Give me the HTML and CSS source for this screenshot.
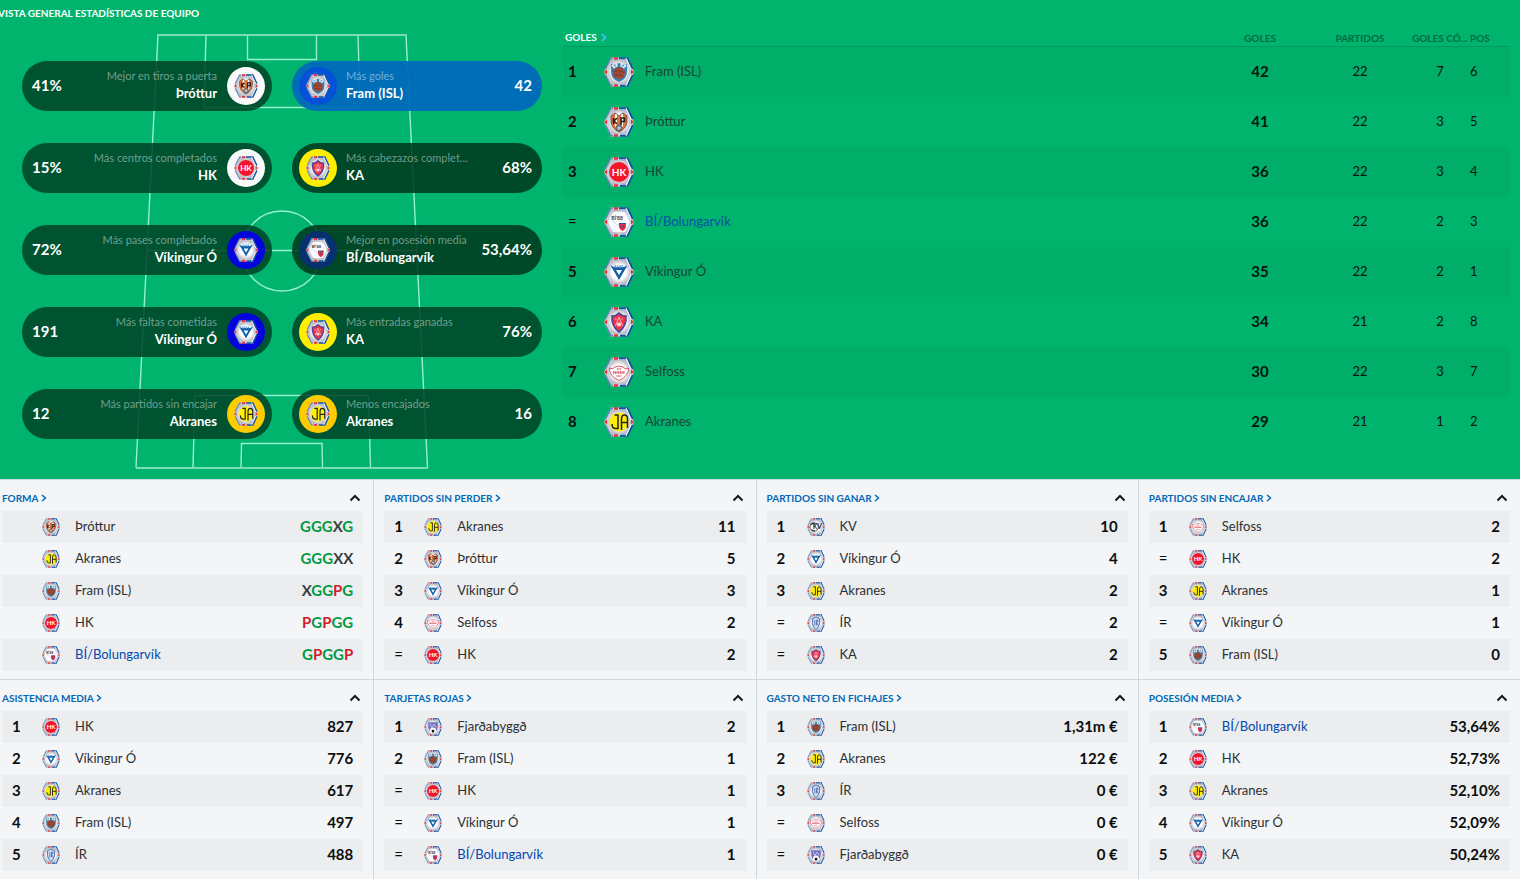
FILE: index.html
```
<!DOCTYPE html>
<html lang="es">
<head>
    <meta charset="UTF-8">
    <meta name="viewport" content="width=device-width, initial-scale=1.0">
    <title>Estadísticas de equipo</title>
    <link rel="stylesheet" href="styles.css">
</head>
<body>
    <!-- Crests and icons -->
    <svg class="sprite" width="0" height="0" aria-hidden="true">
        <defs>
            <radialGradient id="shine">
                <stop offset="0.6" stop-color="#ffffff"/>
                <stop offset="1" stop-color="#b9bcc4"/>
            </radialGradient>
            <symbol id="hex" viewBox="0 0 30 30">
                <path d="M7 0.500H24L30 15L24 29.500H7L0 15Z" fill="#cdd2dc"/>
                <path d="M15 1.300H23.500L28.500 12M28.500 18L23.500 28.700H16" fill="none" stroke="#1450a0" stroke-width="2"/>
                <path d="M1.500 12L7 1.500H9M1.500 18L7 28.500H9" fill="none" stroke="#6d87b3" stroke-width="1.500"/>
                <path d="M22 1L27.500 13M27.500 17L22 29" fill="none" stroke="#ffffff" stroke-width="1"/>
                <path d="M10 1.500H14M10 28.500H14" fill="none" stroke="#e8313b" stroke-width="2.500"/>
                <path d="M0 15L3 12.500V17.500ZM30 15L27 12.500V17.500Z" fill="#e8313b"/>
                <path d="M8 3H22L27 15L22 27H8L3 15Z" fill="url(#shine)"/>
            </symbol>
            <symbol id="fram" viewBox="0 0 30 30">
                <use href="#hex"/>
                <path d="M7 7L10 8L15 6L20 8L23 7V15Q23 22 15 25Q7 22 7 15Z" fill="#3b7fae"/>
                <path d="M8 8L11 11M12.500 7V10M17.500 7V10M22 8L19 11" stroke="#d7eefa" stroke-width="2"/>
                <circle cx="15" cy="16" r="6" fill="#9c4a34"/>
                <path d="M9.500 14.500Q15 12.500 20.500 15.500M10 18.500Q15 16.500 20 19.500" fill="none" stroke="#6d3325" stroke-width="0.700"/>
            </symbol>
            <symbol id="throttur" viewBox="0 0 30 30">
                <use href="#hex"/>
                <path d="M7 9L11 6L15 9L19 6L23 9V15Q22 22 15 25Q8 22 7 15Z" fill="#e4713a"/>
                <path d="M12 7V20M18 7V20" stroke="#ffffff" stroke-width="2"/>
                <path d="M9.500 11V17M13 11L10 14L13 17M17 18V11H20.500V14.500H17" fill="none" stroke="#2b1d1a" stroke-width="1.600"/>
                <path d="M7 9L11 6L15 9L19 6L23 9V15Q22 22 15 25Q8 22 7 15Z" fill="none" stroke="#5b4038" stroke-width="0.800"/>
                <circle cx="15" cy="21" r="3.500" fill="#6a6a6a"/>
                <path d="M13 21H17M15 19V23" stroke="#ffffff" stroke-width="0.800"/>
            </symbol>
            <symbol id="hk" viewBox="0 0 30 30">
                <use href="#hex"/>
                <circle cx="15" cy="15" r="10" fill="#f5152b"/>
                <text x="15" y="18.500" text-anchor="middle" class="mark" font-size="10" fill="#ffffff">HK</text>
            </symbol>
            <symbol id="bi" viewBox="0 0 30 30">
                <use href="#hex"/>
                <path d="M9 5H21L26 15L21 25H9L4 15Z" fill="#fbfbfd"/>
                <text x="13" y="13" text-anchor="middle" class="mark" font-size="5" fill="#33343a">BÍ'88</text>
                <path d="M8 14L17 20" stroke="#c4c4cc" stroke-width="0.700"/>
                <path d="M15 16H22V19Q22 22 18.500 24Q15 22 15 19Z" fill="#e1324a"/>
                <path d="M15 16.500H22M17 21L18.500 19L20 21" fill="none" stroke="#36519c" stroke-width="1.200"/>
            </symbol>
            <symbol id="vikingur" viewBox="0 0 30 30">
                <use href="#hex"/>
                <path d="M6.500 8.500L10 10H20L23.500 8.500L19 16L15 23L11 16Z" fill="#0f5faa"/>
                <path d="M12 13H18L15 18Z" fill="#ffffff"/>
                <path d="M10.500 9.500H19.500" stroke="#6aa2d5" stroke-width="2.500" stroke-dasharray="1.500 0.800"/>
            </symbol>
            <symbol id="ka" viewBox="0 0 30 30">
                <use href="#hex"/>
                <path d="M8 9Q12 9 15 6Q18 9 22 9Q23 19 15 25Q7 19 8 9Z" fill="#ef3348" stroke="#49479c" stroke-width="1.600"/>
                <path d="M11.500 19L15 10L18.500 19M11 12H12.500M17.500 12H19" fill="none" stroke="#ffb9c0" stroke-width="1"/>
                <circle cx="15" cy="17.500" r="2" fill="#ffd9dc"/>
            </symbol>
            <symbol id="selfoss" viewBox="0 0 30 30">
                <use href="#hex"/>
                <path d="M5.500 11Q9 13 11 10Q15 8 19 10Q21 13 24.500 11Q25 19 15 23.500Q5 19 5.500 11Z" fill="#ffffff" stroke="#dc5468" stroke-width="1"/>
                <path d="M13 12H17" stroke="#dc5468" stroke-width="1.500" stroke-dasharray="1 0.500"/>
                <path d="M9 15.500H21" stroke="#dc5468" stroke-width="2.500" stroke-dasharray="1.200 0.500"/>
                <path d="M12.500 19H17.500" stroke="#dc5468" stroke-width="1.500" stroke-dasharray="1 0.500"/>
            </symbol>
            <symbol id="akranes" viewBox="0 0 30 30">
                <use href="#hex"/>
                <circle cx="15" cy="15" r="9.500" fill="#fcee05"/>
                <path d="M10.500 8H14V21.500H11.500Q8 21.500 8 17M17.500 23V12Q17.500 8 20.500 8Q23.500 8 23.500 12V21M17.500 15.500H23.500" fill="none" stroke="#222222" stroke-width="1.500"/>
            </symbol>
            <symbol id="kv" viewBox="0 0 30 30">
                <use href="#hex"/>
                <circle cx="12" cy="15" r="7" fill="#ffffff" stroke="#222222" stroke-width="1.200"/>
                <path d="M6 11L10 9L14 11M8 20L13 21.500" stroke="#222222" stroke-width="1.800" fill="none"/>
                <text x="17" y="19" text-anchor="middle" class="mark" font-size="11" fill="#222222">KV</text>
            </symbol>
            <symbol id="ir" viewBox="0 0 30 30">
                <use href="#hex"/>
                <path d="M9 8L15 5L21 8V16Q20 22 15 26Q10 22 9 16Z" fill="#cfdcf0" stroke="#3c63ab" stroke-width="1.500"/>
                <path d="M13 10V19M16 19V10H18Q19 13 16 14L19 19" fill="none" stroke="#3c63ab" stroke-width="1.300"/>
            </symbol>
            <symbol id="fjarda" viewBox="0 0 30 30">
                <use href="#hex"/>
                <path d="M7 7H23V16Q22 22 15 26Q8 22 7 16Z" fill="#7471bd"/>
                <path d="M10 9L13 16L17 10L20 16" fill="none" stroke="#c9c8ec" stroke-width="1.500"/>
                <circle cx="15" cy="21" r="5" fill="#ffffff"/>
                <path d="M15 19L17.500 21L16.500 24H13.500L12.500 21Z" fill="#16161c"/>
            </symbol>
            <symbol id="next" viewBox="0 0 6 8">
                <path d="M1 1L4.500 4L1 7" fill="none" stroke="currentColor" stroke-width="1.500"/>
            </symbol>
            <symbol id="up" viewBox="0 0 12 8">
                <path d="M1.500 6.500L6 2L10.500 6.500" fill="none" stroke="currentColor" stroke-width="2"/>
            </symbol>
        </defs>
    </svg>

    <main class="page">
        <section class="overview">
            <div class="overview-left">
                <h1>VISTA GENERAL ESTADÍSTICAS DE EQUIPO</h1>
                <div class="field">
                    <svg class="pitch" viewBox="0 0 294 436" aria-hidden="true">
                        <g fill="none" stroke="#98efd0" stroke-width="1.400">
                            <path d="M23 2L1 434.500M292.500 434.500L271 2"/>
                            <path d="M71 2L69 74.500H225L223 2"/>
                            <path d="M112.500 2V26.500H181.500V2"/>
                            <path d="M12 217.500H281.500"/>
                            <ellipse cx="147" cy="218" rx="40" ry="40"/>
                            <path d="M58 434L60 362.500H233.500L235.500 434"/>
                            <path d="M106 434L106.500 410.500H187L187.500 434"/>
                        </g>
                        <path d="M22 2H272M1 435H293" stroke="#78dcb6" stroke-width="2"/>
                    </svg>
                    <div class="pills">
                        <div class="pill">
                            <strong class="pill-value">41%</strong>
                            <div class="pill-text"><small>Mejor en tiros a puerta</small><b>Þróttur</b></div>
                            <span class="disc white"><svg><use href="#throttur"/></svg></span>
                        </div>
                        <div class="pill flip blue">
                            <strong class="pill-value">42</strong>
                            <div class="pill-text"><small>Más goles</small><b>Fram (ISL)</b></div>
                            <span class="disc royal"><svg><use href="#fram"/></svg></span>
                        </div>
                        <div class="pill">
                            <strong class="pill-value">15%</strong>
                            <div class="pill-text"><small>Más centros completados</small><b>HK</b></div>
                            <span class="disc white"><svg><use href="#hk"/></svg></span>
                        </div>
                        <div class="pill flip dark">
                            <strong class="pill-value">68%</strong>
                            <div class="pill-text"><small>Más cabezazos complet...</small><b>KA</b></div>
                            <span class="disc yellow"><svg><use href="#ka"/></svg></span>
                        </div>
                        <div class="pill">
                            <strong class="pill-value">72%</strong>
                            <div class="pill-text"><small>Más pases completados</small><b>Víkingur Ó</b></div>
                            <span class="disc deep"><svg><use href="#vikingur"/></svg></span>
                        </div>
                        <div class="pill flip dark">
                            <strong class="pill-value">53,64%</strong>
                            <div class="pill-text"><small>Mejor en posesión media</small><b>BÍ/Bolungarvík</b></div>
                            <span class="disc navy"><svg><use href="#bi"/></svg></span>
                        </div>
                        <div class="pill">
                            <strong class="pill-value">191</strong>
                            <div class="pill-text"><small>Más faltas cometidas</small><b>Víkingur Ó</b></div>
                            <span class="disc deep"><svg><use href="#vikingur"/></svg></span>
                        </div>
                        <div class="pill flip">
                            <strong class="pill-value">76%</strong>
                            <div class="pill-text"><small>Más entradas ganadas</small><b>KA</b></div>
                            <span class="disc yellow"><svg><use href="#ka"/></svg></span>
                        </div>
                        <div class="pill">
                            <strong class="pill-value">12</strong>
                            <div class="pill-text"><small>Más partidos sin encajar</small><b>Akranes</b></div>
                            <span class="disc gold"><svg><use href="#akranes"/></svg></span>
                        </div>
                        <div class="pill flip">
                            <strong class="pill-value">16</strong>
                            <div class="pill-text"><small>Menos encajados</small><b>Akranes</b></div>
                            <span class="disc gold"><svg><use href="#akranes"/></svg></span>
                        </div>
                    </div>
                </div>
            </div>

            <table class="goals">
                <thead>
                    <tr>
                        <th colspan="3" class="goals-title"><a href="#">GOLES <svg class="next"><use href="#next"/></svg></a></th>
                        <th class="wide">GOLES</th>
                        <th class="wide">PARTIDOS</th>
                        <th class="corner">GOLES CÓ...</th>
                        <th class="pos">POS</th>
                    </tr>
                </thead>
                <tbody>
                    <tr><td class="rank">1</td><td class="crest"><svg><use href="#fram"/></svg></td><td>Fram (ISL)</td><td class="total">42</td><td class="num">22</td><td class="num">7</td><td class="last">6</td></tr>
                    <tr><td class="rank">2</td><td class="crest"><svg><use href="#throttur"/></svg></td><td>Þróttur</td><td class="total">41</td><td class="num">22</td><td class="num">3</td><td class="last">5</td></tr>
                    <tr><td class="rank">3</td><td class="crest"><svg><use href="#hk"/></svg></td><td>HK</td><td class="total">36</td><td class="num">22</td><td class="num">3</td><td class="last">4</td></tr>
                    <tr><td class="rank tie">=</td><td class="crest"><svg><use href="#bi"/></svg></td><td class="own">BÍ/Bolungarvík</td><td class="total">36</td><td class="num">22</td><td class="num">2</td><td class="last">3</td></tr>
                    <tr><td class="rank">5</td><td class="crest"><svg><use href="#vikingur"/></svg></td><td>Víkingur Ó</td><td class="total">35</td><td class="num">22</td><td class="num">2</td><td class="last">1</td></tr>
                    <tr><td class="rank">6</td><td class="crest"><svg><use href="#ka"/></svg></td><td>KA</td><td class="total">34</td><td class="num">21</td><td class="num">2</td><td class="last">8</td></tr>
                    <tr><td class="rank">7</td><td class="crest"><svg><use href="#selfoss"/></svg></td><td>Selfoss</td><td class="total">30</td><td class="num">22</td><td class="num">3</td><td class="last">7</td></tr>
                    <tr><td class="rank">8</td><td class="crest"><svg><use href="#akranes"/></svg></td><td>Akranes</td><td class="total">29</td><td class="num">21</td><td class="num">1</td><td class="last">2</td></tr>
                </tbody>
            </table>
        </section>

        <section class="cards">
            <article class="card">
                <header><h2><a href="#">FORMA <svg class="next"><use href="#next"/></svg></a></h2><button type="button" aria-label="Contraer"><svg><use href="#up"/></svg></button></header>
                <table>
                    <tr><td class="rank"></td><td class="crest"><svg><use href="#throttur"/></svg></td><td>Þróttur</td><td class="value form"><i class="g">G</i><i class="g">G</i><i class="g">G</i><i>X</i><i class="g">G</i></td></tr>
                    <tr><td class="rank"></td><td class="crest"><svg><use href="#akranes"/></svg></td><td>Akranes</td><td class="value form"><i class="g">G</i><i class="g">G</i><i class="g">G</i><i>X</i><i>X</i></td></tr>
                    <tr><td class="rank"></td><td class="crest"><svg><use href="#fram"/></svg></td><td>Fram (ISL)</td><td class="value form"><i>X</i><i class="g">G</i><i class="g">G</i><i class="p">P</i><i class="g">G</i></td></tr>
                    <tr><td class="rank"></td><td class="crest"><svg><use href="#hk"/></svg></td><td>HK</td><td class="value form"><i class="p">P</i><i class="g">G</i><i class="p">P</i><i class="g">G</i><i class="g">G</i></td></tr>
                    <tr><td class="rank"></td><td class="crest"><svg><use href="#bi"/></svg></td><td class="own">BÍ/Bolungarvík</td><td class="value form"><i class="g">G</i><i class="p">P</i><i class="g">G</i><i class="g">G</i><i class="p">P</i></td></tr>
                </table>
            </article>

            <article class="card">
                <header><h2><a href="#">PARTIDOS SIN PERDER <svg class="next"><use href="#next"/></svg></a></h2><button type="button" aria-label="Contraer"><svg><use href="#up"/></svg></button></header>
                <table>
                    <tr><td class="rank">1</td><td class="crest"><svg><use href="#akranes"/></svg></td><td>Akranes</td><td class="value">11</td></tr>
                    <tr><td class="rank">2</td><td class="crest"><svg><use href="#throttur"/></svg></td><td>Þróttur</td><td class="value">5</td></tr>
                    <tr><td class="rank">3</td><td class="crest"><svg><use href="#vikingur"/></svg></td><td>Víkingur Ó</td><td class="value">3</td></tr>
                    <tr><td class="rank">4</td><td class="crest"><svg><use href="#selfoss"/></svg></td><td>Selfoss</td><td class="value">2</td></tr>
                    <tr><td class="rank tie">=</td><td class="crest"><svg><use href="#hk"/></svg></td><td>HK</td><td class="value">2</td></tr>
                </table>
            </article>

            <article class="card">
                <header><h2><a href="#">PARTIDOS SIN GANAR <svg class="next"><use href="#next"/></svg></a></h2><button type="button" aria-label="Contraer"><svg><use href="#up"/></svg></button></header>
                <table>
                    <tr><td class="rank">1</td><td class="crest"><svg><use href="#kv"/></svg></td><td>KV</td><td class="value">10</td></tr>
                    <tr><td class="rank">2</td><td class="crest"><svg><use href="#vikingur"/></svg></td><td>Víkingur Ó</td><td class="value">4</td></tr>
                    <tr><td class="rank">3</td><td class="crest"><svg><use href="#akranes"/></svg></td><td>Akranes</td><td class="value">2</td></tr>
                    <tr><td class="rank tie">=</td><td class="crest"><svg><use href="#ir"/></svg></td><td>ÍR</td><td class="value">2</td></tr>
                    <tr><td class="rank tie">=</td><td class="crest"><svg><use href="#ka"/></svg></td><td>KA</td><td class="value">2</td></tr>
                </table>
            </article>

            <article class="card">
                <header><h2><a href="#">PARTIDOS SIN ENCAJAR <svg class="next"><use href="#next"/></svg></a></h2><button type="button" aria-label="Contraer"><svg><use href="#up"/></svg></button></header>
                <table>
                    <tr><td class="rank">1</td><td class="crest"><svg><use href="#selfoss"/></svg></td><td>Selfoss</td><td class="value">2</td></tr>
                    <tr><td class="rank tie">=</td><td class="crest"><svg><use href="#hk"/></svg></td><td>HK</td><td class="value">2</td></tr>
                    <tr><td class="rank">3</td><td class="crest"><svg><use href="#akranes"/></svg></td><td>Akranes</td><td class="value">1</td></tr>
                    <tr><td class="rank tie">=</td><td class="crest"><svg><use href="#vikingur"/></svg></td><td>Víkingur Ó</td><td class="value">1</td></tr>
                    <tr><td class="rank">5</td><td class="crest"><svg><use href="#fram"/></svg></td><td>Fram (ISL)</td><td class="value">0</td></tr>
                </table>
            </article>

            <article class="card">
                <header><h2><a href="#">ASISTENCIA MEDIA <svg class="next"><use href="#next"/></svg></a></h2><button type="button" aria-label="Contraer"><svg><use href="#up"/></svg></button></header>
                <table>
                    <tr><td class="rank">1</td><td class="crest"><svg><use href="#hk"/></svg></td><td>HK</td><td class="value">827</td></tr>
                    <tr><td class="rank">2</td><td class="crest"><svg><use href="#vikingur"/></svg></td><td>Víkingur Ó</td><td class="value">776</td></tr>
                    <tr><td class="rank">3</td><td class="crest"><svg><use href="#akranes"/></svg></td><td>Akranes</td><td class="value">617</td></tr>
                    <tr><td class="rank">4</td><td class="crest"><svg><use href="#fram"/></svg></td><td>Fram (ISL)</td><td class="value">497</td></tr>
                    <tr><td class="rank">5</td><td class="crest"><svg><use href="#ir"/></svg></td><td>ÍR</td><td class="value">488</td></tr>
                </table>
            </article>

            <article class="card">
                <header><h2><a href="#">TARJETAS ROJAS <svg class="next"><use href="#next"/></svg></a></h2><button type="button" aria-label="Contraer"><svg><use href="#up"/></svg></button></header>
                <table>
                    <tr><td class="rank">1</td><td class="crest"><svg><use href="#fjarda"/></svg></td><td>Fjarðabyggð</td><td class="value">2</td></tr>
                    <tr><td class="rank">2</td><td class="crest"><svg><use href="#fram"/></svg></td><td>Fram (ISL)</td><td class="value">1</td></tr>
                    <tr><td class="rank tie">=</td><td class="crest"><svg><use href="#hk"/></svg></td><td>HK</td><td class="value">1</td></tr>
                    <tr><td class="rank tie">=</td><td class="crest"><svg><use href="#vikingur"/></svg></td><td>Víkingur Ó</td><td class="value">1</td></tr>
                    <tr><td class="rank tie">=</td><td class="crest"><svg><use href="#bi"/></svg></td><td class="own">BÍ/Bolungarvík</td><td class="value">1</td></tr>
                </table>
            </article>

            <article class="card">
                <header><h2><a href="#">GASTO NETO EN FICHAJES <svg class="next"><use href="#next"/></svg></a></h2><button type="button" aria-label="Contraer"><svg><use href="#up"/></svg></button></header>
                <table>
                    <tr><td class="rank">1</td><td class="crest"><svg><use href="#fram"/></svg></td><td>Fram (ISL)</td><td class="value">1,31m €</td></tr>
                    <tr><td class="rank">2</td><td class="crest"><svg><use href="#akranes"/></svg></td><td>Akranes</td><td class="value">122 €</td></tr>
                    <tr><td class="rank">3</td><td class="crest"><svg><use href="#ir"/></svg></td><td>ÍR</td><td class="value">0 €</td></tr>
                    <tr><td class="rank tie">=</td><td class="crest"><svg><use href="#selfoss"/></svg></td><td>Selfoss</td><td class="value">0 €</td></tr>
                    <tr><td class="rank tie">=</td><td class="crest"><svg><use href="#fjarda"/></svg></td><td>Fjarðabyggð</td><td class="value">0 €</td></tr>
                </table>
            </article>

            <article class="card">
                <header><h2><a href="#">POSESIÓN MEDIA <svg class="next"><use href="#next"/></svg></a></h2><button type="button" aria-label="Contraer"><svg><use href="#up"/></svg></button></header>
                <table>
                    <tr><td class="rank">1</td><td class="crest"><svg><use href="#bi"/></svg></td><td class="own">BÍ/Bolungarvík</td><td class="value">53,64%</td></tr>
                    <tr><td class="rank">2</td><td class="crest"><svg><use href="#hk"/></svg></td><td>HK</td><td class="value">52,73%</td></tr>
                    <tr><td class="rank">3</td><td class="crest"><svg><use href="#akranes"/></svg></td><td>Akranes</td><td class="value">52,10%</td></tr>
                    <tr><td class="rank">4</td><td class="crest"><svg><use href="#vikingur"/></svg></td><td>Víkingur Ó</td><td class="value">52,09%</td></tr>
                    <tr><td class="rank">5</td><td class="crest"><svg><use href="#ka"/></svg></td><td>KA</td><td class="value">50,24%</td></tr>
                </table>
            </article>
        </section>
    </main>
</body>
</html>
```

FILE: styles.css
```
* {
    box-sizing: border-box;
}

body {
    margin: 0;
    font-family: Lato, "Liberation Sans", sans-serif;
    font-size: 13px;
    line-height: 16px;
    color: #2b3033;
    background-color: #f4f5f7;
}

.sprite {
    display: block;
}

.mark {
    font-family: Lato, sans-serif;
    font-weight: 700;
}

.page {
    overflow: hidden;
}

a {
    color: inherit;
    text-decoration: none;
}

table {
    border-collapse: separate;
    border-spacing: 0;
    table-layout: fixed;
    width: 100%;
}

td,
th {
    padding: 0;
    text-align: left;
    white-space: nowrap;
}

td {
    padding-bottom: 2px;
}

.rank,
.total,
.value {
    font-size: 15px;
    font-weight: 700;
    color: #0b0f10;
}

.tie {
    font-weight: 400;
}

.next {
    width: 6px;
    height: 8px;
}

/* Green overview */
.overview {
    display: flex;
    background-color: #00b46e;
}

.overview-left {
    flex: none;
    padding-left: 22px;
}

.overview h1 {
    margin: 0 0 0 -24px;
    padding: 5px 0 7px;
    font-size: 10px;
    line-height: 16px;
    font-weight: 700;
    color: #fff;
}

.field {
    display: grid;
    padding-top: 5px;
}

.pitch {
    grid-area: 1 / 1;
    justify-self: center;
    width: 294px;
    height: 436px;
}

.pills {
    grid-area: 1 / 1;
    display: grid;
    grid-template-columns: 250px 250px;
    align-content: start;
    gap: 32px 20px;
    padding: 28px 0 40px;
}

.pill {
    display: flex;
    align-items: center;
    height: 50px;
    padding: 0 7px 0 10px;
    border-radius: 25px;
    background-color: rgba(0, 66, 38, 0.86);
    color: #fff;
}

.pill.flip {
    flex-direction: row-reverse;
    padding: 0 10px 0 7px;
}

.pill.dark {
    background-color: rgba(0, 55, 29, 0.86);
}

.pill.blue {
    background-color: rgba(0, 106, 186, 0.95);
}

.pill-value {
    padding-bottom: 3px;
    font-size: 15px;
}

.pill-text {
    flex: 1;
    display: flex;
    flex-direction: column;
    padding: 0 10px 4px;
    text-align: right;
    white-space: nowrap;
}

.flip .pill-text {
    padding: 0 9px 4px;
    text-align: left;
}

.pill-text small {
    font-size: 11px;
    line-height: 18px;
    color: rgba(255, 255, 255, 0.45);
}

.disc {
    display: flex;
    align-items: center;
    justify-content: center;
    width: 38px;
    height: 38px;
    border-radius: 50%;
}

.disc svg {
    width: 24px;
    height: 24px;
}

.white {
    background-color: #fafafa;
}

.royal {
    background-color: #0550d8;
}

.yellow {
    background-color: #ffee00;
}

.deep {
    background-color: #0404dc;
}

.navy {
    background-color: #06306e;
}

.gold {
    background-color: #ffcc00;
}

/* Goals table */
.goals {
    flex: 1;
    align-self: flex-start;
    width: auto;
    margin: 28px 10px 0 21px;
}

.goals th {
    height: 19px;
    padding-top: 2px;
    border-bottom: 1px solid #00995e;
    font-size: 10px;
    font-weight: 700;
    color: #006a42;
}

.goals .goals-title {
    padding: 0 0 0 2px;
    color: #fff;
}

.goals-title .next {
    width: 8px;
    height: 9px;
    margin-left: 1px;
    vertical-align: -1px;
    color: #3fc4f4;
}

.goals .wide {
    width: 100px;
    text-align: center;
}

.goals .corner {
    width: 60px;
    padding-left: 2px;
}

.goals .pos {
    width: 40px;
}

.goals td {
    height: 50px;
    color: #1b4534;
}

.goals tbody tr:nth-child(odd) {
    background-color: #00ae69;
}

.goals .rank {
    width: 41px;
    padding-left: 5px;
    color: #0b0f10;
}

.goals .crest {
    width: 41px;
}

.goals .crest svg {
    display: block;
    width: 30px;
    height: 30px;
}

.goals .total,
.goals .num {
    text-align: center;
    color: #04150e;
}

.goals .last {
    color: #04150e;
}

.goals .own {
    color: #0a4fa8;
}

/* Bottom cards */
.cards {
    display: grid;
    grid-template-columns: repeat(4, 1fr);
    margin: 0 -1px 0 -8px;
}

.card {
    padding: 0 10px 8px;
    border-top: 1px solid #cfd8df;
    border-right: 1px solid #cfd8df;
}

.card header {
    display: flex;
    align-items: center;
    justify-content: space-between;
    height: 31px;
    padding-top: 4px;
}

.card h2 {
    margin: 0;
    font-size: 10px;
    font-weight: 700;
    color: #0068b8;
}

.card button {
    display: flex;
    padding: 2px;
    border: 0;
    background: none;
    color: #15181a;
    cursor: pointer;
}

.card button svg {
    width: 12px;
    height: 8px;
}

.card td {
    height: 32px;
}

.card tr:nth-child(odd) {
    background-color: #ecedef;
}

.card .rank {
    width: 40px;
    padding-left: 10px;
}

.card .crest {
    width: 33px;
}

.crest {
    padding-bottom: 0;
}

.crest svg {
    display: block;
    width: 18px;
    height: 18px;
}

.card .value {
    width: 100px;
    padding-right: 10px;
    text-align: right;
}

.own {
    color: #0048b0;
}

.form i {
    font-style: normal;
    color: #3a3f44;
}

.form .g {
    color: #009a44;
}

.form .p {
    color: #d0202e;
}
```
